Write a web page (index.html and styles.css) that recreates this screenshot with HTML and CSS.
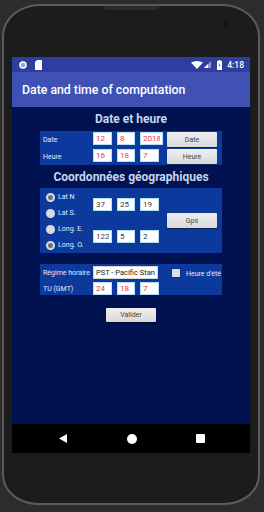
FILE: index.html
```html
<!DOCTYPE html>
<html lang="fr">
<head>
    <meta charset="UTF-8">
    <meta name="viewport" content="width=device-width, initial-scale=1.0">
    <title>Date and time of computation</title>
    <link rel="stylesheet" href="styles.css">
</head>
<body>
    <div class="phone">
        <div class="top">
            <div class="speaker"></div>
            <div class="camera-row"><div class="camera"></div></div>
        </div>

        <div class="screen">
            <div class="status">
                <svg class="ic-dot" width="8" height="8" viewBox="0 0 8 8"><circle cx="4" cy="4" r="3" fill="#9aa3d6" stroke="#fff" stroke-width="1.5"/></svg>
                <svg class="ic-sd" width="7" height="10" viewBox="0 0 7 10"><path d="M2 0H7V10H0V2Z" fill="#fff"/></svg>
                <span class="spacer"></span>
                <svg class="ic-wifi" width="12" height="8" viewBox="0 0 12 8"><path d="M0 1.5Q6 -1.5 12 1.5L6 8Z" fill="#fff"/></svg>
                <svg class="ic-signal" width="7" height="7" viewBox="0 0 7 7"><path d="M7 0V7H0Z" fill="#8f97cf"/><path d="M4 3V7H0Z" fill="#fff"/></svg>
                <svg class="ic-battery" width="5" height="10" viewBox="0 0 5 10"><path d="M1.5 0H3.5V1H5V10H0V1H1.5Z" fill="#fff"/><path d="M2.8 3L1.5 5.6H2.6L2.2 7.5L3.5 4.8H2.4Z" fill="#2f3d9c"/></svg>
                <span class="time">4:18</span>
            </div>

            <div class="appbar">Date and time of computation</div>

            <div class="content">
                <div class="title">Date et heure</div>
                <div class="panel date-panel">
                    <span class="lbl">Date</span>
                    <input class="f red" value="12">
                    <input class="f red" value="8">
                    <input class="f red" value="2018">
                    <button class="btn">Date</button>

                    <span class="lbl">Heure</span>
                    <input class="f red" value="16">
                    <input class="f red" value="18">
                    <input class="f red narrow" value="7">
                    <button class="btn">Heure</button>
                </div>

                <div class="title title-geo">Coordonnées géographiques</div>
                <div class="panel geo-panel">
                    <div class="radios">
                        <div class="radio-item"><span class="radio checked"></span>Lat N</div>
                        <div class="radio-item"><span class="radio"></span>Lat S.</div>
                        <div class="radio-item"><span class="radio"></span>Long. E.</div>
                        <div class="radio-item"><span class="radio checked"></span>Long. O.</div>
                    </div>
                    <div class="coords">
                        <div class="coord-row">
                            <input class="f" value="37">
                            <input class="f w18" value="25">
                            <input class="f" value="19">
                        </div>
                        <div class="coord-row">
                            <input class="f" value="122">
                            <input class="f w18" value="5">
                            <input class="f" value="2">
                        </div>
                    </div>
                    <button class="btn btn-gps">Gps</button>
                </div>

                <div class="panel tz-panel">
                    <div class="tz-row">
                        <span class="lbl">Régime horaire</span>
                        <input class="f wide" value="PST - Pacific Standard Time">
                        <span class="check"></span>
                        <span class="check-lbl">Heure d'été</span>
                    </div>
                    <div class="tz-row">
                        <span class="lbl">TU (GMT)</span>
                        <input class="f red" value="24">
                        <input class="f red w18" value="18">
                        <input class="f red" value="7">
                    </div>
                </div>

                <button class="btn btn-ok">Valider</button>
            </div>

            <div class="nav">
                <div class="nav-cell">
                    <svg width="8" height="9" viewBox="0 0 8 9"><path d="M8 0V9L0 4.5Z" fill="#fff"/></svg>
                </div>
                <div class="nav-cell"><span class="home"></span></div>
                <div class="nav-cell"><span class="recent"></span></div>
            </div>
        </div>
    </div>
</body>
</html>
```

FILE: styles.css
```css
body {
    margin: 0;
    background-color: #2c2c2c;
    font-family: Roboto, "Noto Sans", sans-serif;
}

.phone {
    box-sizing: border-box;
    width: 258px;
    height: 501px;
    margin: 4px 0 0 2px;
    padding: 0 8px;
    background-color: #1c1c1c;
    border: 2px solid #5b5b5b;
    border-radius: 38px 38px 36px 36px / 32px 32px 30px 30px;
}

.top {
    height: 51px;
    display: flex;
    flex-direction: column;
}

.speaker {
    width: 56px;
    height: 4px;
    margin: 0 auto;
    background-color: #2b2b2b;
    border-radius: 0 0 6px 6px;
}

.camera-row {
    display: flex;
    justify-content: flex-end;
    padding-right: 20px;
    margin-top: 10px;
}

.camera {
    width: 8px;
    height: 8px;
    border-radius: 50%;
    background-color: #161616;
    box-shadow: 0 0 0 1px #262626;
}

.screen {
    width: 238px;
    height: 396px;
    display: flex;
    flex-direction: column;
}

/* barre d'état */
.status {
    height: 15px;
    flex-shrink: 0;
    display: flex;
    align-items: center;
    padding: 0 6px 0 7px;
    background-color: #2f3d9c;
    color: #fff;
}

.ic-sd {
    margin-left: 8px;
}

.spacer {
    flex: 1;
}

.ic-signal {
    margin-left: 1px;
}

.ic-battery {
    margin-left: 6px;
}

.time {
    margin-left: 5px;
    font-size: 8.5px;
    font-weight: 500;
}

.appbar {
    height: 35px;
    flex-shrink: 0;
    display: flex;
    align-items: center;
    padding-left: 10px;
    background-color: #3f51b5;
    color: #fff;
    font-size: 12.3px;
    font-weight: 500;
}

.content {
    flex: 1;
    padding-top: 2px;
    background-color: #001250;
}

.title {
    font-size: 12px;
    font-weight: 700;
    line-height: 20px;
    color: #c7d5ef;
    text-align: center;
}

.title-geo {
    margin-top: 2px;
}

.panel {
    box-sizing: border-box;
    width: 182px;
    margin: 2px auto 0;
    background-color: #0c3a9c;
}

.lbl {
    font-size: 7px;
    color: #e3e9fb;
}

.f {
    box-sizing: border-box;
    width: 19px;
    height: 13px;
    padding: 0 2px;
    border: 1px solid #b3e0f4;
    background-color: #fff;
    font-family: inherit;
    font-size: 8px;
    color: #3a3a3a;
    outline: none;
}

.f.red {
    color: #e53935;
}

.w18 {
    width: 18px;
}

.btn {
    box-sizing: border-box;
    width: 50px;
    height: 15px;
    padding: 0;
    border: none;
    border-radius: 1px;
    background: linear-gradient(#efefef, #d9d9d9);
    box-shadow: 0 1px 1px rgba(0, 0, 0, 0.45);
    font-family: inherit;
    font-size: 7px;
    color: #444;
}

/* date et heure */
.date-panel {
    display: grid;
    grid-template-columns: 45px 19px 18px 22px 50px;
    grid-auto-rows: 15px;
    column-gap: 5px;
    row-gap: 2px;
    padding: 1px 5px 1px 3px;
}

.date-panel .lbl {
    align-self: center;
}

.date-panel .f {
    width: 100%;
    align-self: start;
}

.date-panel .f:nth-of-type(3) {
    width: 23px;
}

.date-panel .f.narrow {
    width: 19px;
}

/* coordonnées */
.geo-panel {
    height: 65px;
    display: flex;
    margin-top: 1px;
}

.radios {
    width: 53px;
    padding-top: 1px;
}

.radio-item {
    height: 16px;
    display: flex;
    align-items: center;
    font-size: 7px;
    color: #e3e9fb;
}

.radio {
    box-sizing: border-box;
    width: 9px;
    height: 9px;
    margin: 0 3px 0 6px;
    border-radius: 50%;
    background-color: #dcdcdc;
}

.radio.checked {
    border: 2.5px solid #dcdcdc;
    background-color: #6d6d6d;
}

.coords {
    width: 74px;
    display: flex;
    flex-direction: column;
    gap: 19px;
    padding-top: 10px;
}

.coord-row {
    display: flex;
    gap: 5px;
}

.btn-gps {
    align-self: center;
}

/* régime horaire */
.tz-panel {
    margin-top: 11px;
    padding: 2px 0 0 3px;
    display: flex;
    flex-direction: column;
    gap: 3px;
}

.tz-row {
    height: 13px;
    display: flex;
    align-items: center;
}

.tz-row .lbl {
    width: 50px;
}

.tz-row .f + .f {
    margin-left: 5px;
}

.f.wide {
    width: 65px;
    font-size: 7.5px;
    color: #222;
    border-color: #d5d5d5;
}

.check {
    width: 8px;
    height: 8px;
    margin-left: 14px;
    border-radius: 1px;
    background-color: #dcdcdc;
}

.check-lbl {
    margin: 3px 0 0 6px;
    font-size: 7px;
    color: #e3e9fb;
}

.btn-ok {
    display: block;
    height: 14px;
    margin: 13px auto 0;
}

/* barre de navigation */
.nav {
    height: 29px;
    flex-shrink: 0;
    display: flex;
    align-items: center;
    padding: 0 15px 0 16px;
    background-color: #000;
}

.nav-cell {
    flex: 1;
    display: flex;
    justify-content: center;
    align-items: center;
}

.home {
    width: 10px;
    height: 10px;
    border-radius: 50%;
    background-color: #fff;
}

.recent {
    width: 9px;
    height: 9px;
    border-radius: 1px;
    background-color: #fff;
}
```
